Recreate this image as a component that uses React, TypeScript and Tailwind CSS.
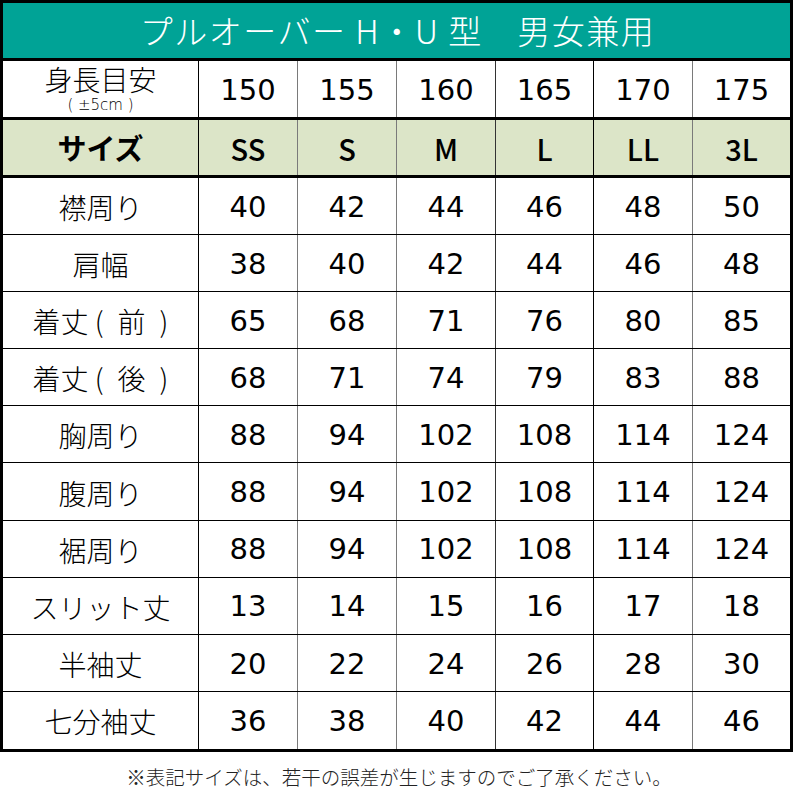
const heights = ["150", "155", "160", "165", "170", "175"];
const sizes = ["SS", "S", "M", "L", "LL", "3L"];

const rows: [string, string[]][] = [
  ["襟周り", ["40", "42", "44", "46", "48", "50"]],
  ["肩幅", ["38", "40", "42", "44", "46", "48"]],
  ["着丈 (\u2002前\u2002)", ["65", "68", "71", "76", "80", "85"]],
  ["着丈 (\u2002後\u2002)", ["68", "71", "74", "79", "83", "88"]],
  ["胸周り", ["88", "94", "102", "108", "114", "124"]],
  ["腹周り", ["88", "94", "102", "108", "114", "124"]],
  ["裾周り", ["88", "94", "102", "108", "114", "124"]],
  ["スリット丈", ["13", "14", "15", "16", "17", "18"]],
  ["半袖丈", ["20", "22", "24", "26", "28", "30"]],
  ["七分袖丈", ["36", "38", "40", "42", "44", "46"]],
];

// column divider colours, alternating dark / grey like the source sheet
const lineCls = [
  "border-r border-black",
  "border-r border-[#7a7a7a]",
  "border-r border-[#7a7a7a]",
  "border-r border-[#333]",
  "border-r border-black",
  "border-r border-[#7a7a7a]",
  "",
];

const jp = { fontFamily: '"Noto Sans CJK JP", "Noto Sans", sans-serif' };
const num = { fontFamily: '"DejaVu Sans", "Noto Sans CJK JP", sans-serif' };

function Row({
  label,
  cells,
  className,
  cellClass,
  cellFont = num,
}: {
  label: React.ReactNode;
  cells: string[];
  className: string;
  cellClass?: string;
  cellFont?: React.CSSProperties;
}) {
  return (
    <div className={`grid grid-cols-[196px_99px_99px_99px_98px_99px_1fr] ${className}`}>
      <div className={`flex items-center justify-center ${lineCls[0]}`}>{label}</div>
      {cells.map((c, i) => (
        <div
          key={i}
          className={`flex items-center justify-center pt-[3px] ${lineCls[i + 1]} ${cellClass ?? ""}`}
          style={cellFont}
        >
          {c}
        </div>
      ))}
    </div>
  );
}

export default function App() {
  return (
    <div className="w-[794px] h-[793px] bg-white text-black" style={jp}>
      <div className="w-[793px] border-[3px] border-black">
        {/* Title */}
        <div className="h-[58px] bg-[#00a396] flex items-center justify-center text-white text-[33px] font-light tracking-[1.5px] border-b-[3px] border-black pl-[2px]">
          プルオーバー H・U 型　男女兼用
        </div>

        {/* Height guide */}
        <Row
          className="h-[59px] border-b-[3px] border-black text-[29px]"
          label={
            <div className="flex flex-col items-center">
              <span className="text-[28px] font-light leading-[28px]">身長目安</span>
              <span className="text-[15px] font-light leading-[16px] mt-[4px] whitespace-pre" style={num}>
                ( ±5cm )
              </span>
            </div>
          }
          cells={heights}
        />

        {/* Sizes */}
        <Row
          className="h-[58px] bg-[#dce5c8] border-b-[3px] border-black text-[29px] font-medium"
          label={<span className="text-[29px] font-bold">サイズ</span>}
          cells={sizes}
          cellFont={jp}
        />

        {rows.map(([label, vals], i) => (
          <Row
            key={label}
            className={`h-[57.1px] text-[29px] ${i < rows.length - 1 ? "border-b border-black" : ""}`}
            label={<span className="text-[28px] font-light whitespace-pre pt-[2px]">{label}</span>}
            cells={vals}
          />
        ))}
      </div>
      <div className="text-center text-[19.5px] text-[#222] font-light mt-[10px] pl-[4px]">
        ※表記サイズは、若干の誤差が生じますのでご了承ください。
      </div>
    </div>
  );
}
